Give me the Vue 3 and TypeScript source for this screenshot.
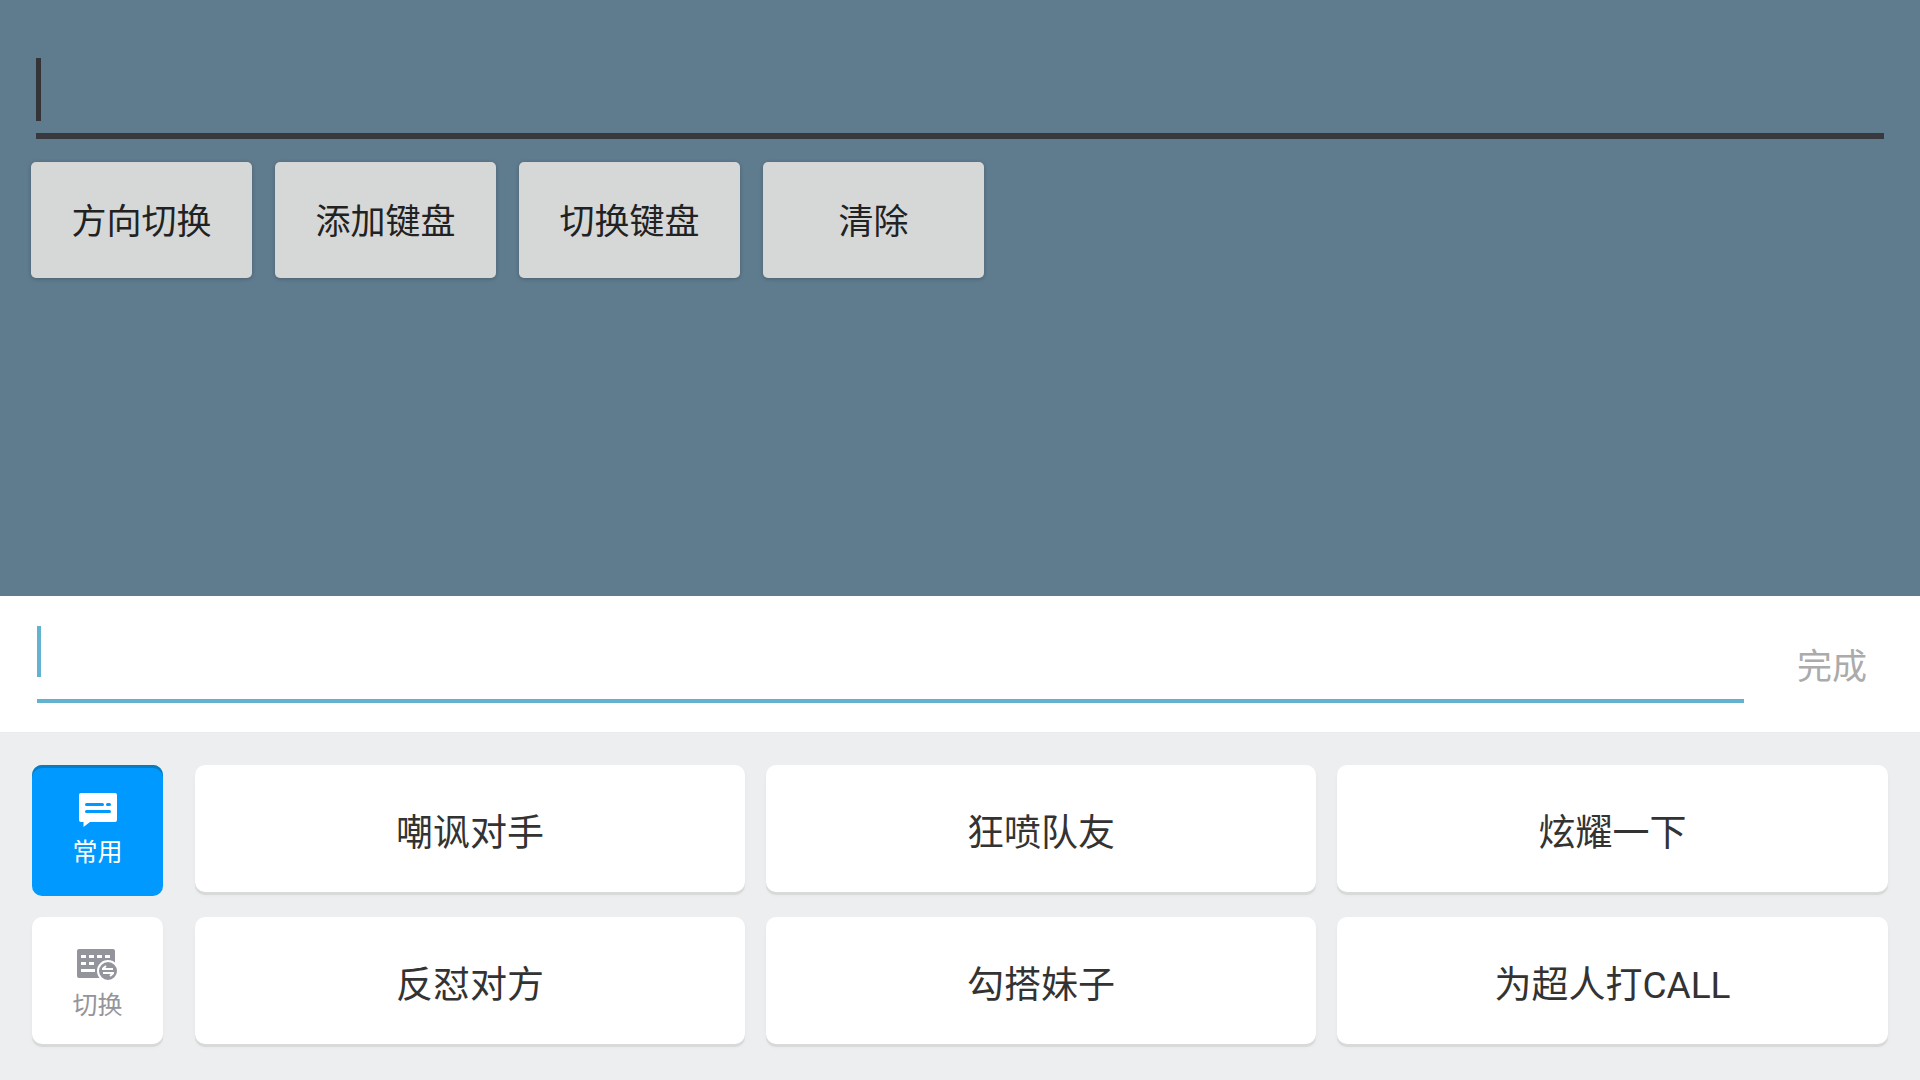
<script setup lang="ts">
const actions: string[] = ['方向切换', '添加键盘', '切换键盘', '清除']
const chips: string[] = ['嘲讽对手', '狂喷队友', '炫耀一下', '反怼对方', '勾搭妹子', '为超人打CALL']
</script>

<template>
  <div class="screen">
    <section class="top">
      <div class="field"><span class="caret"></span></div>
      <div class="actions">
        <button v-for="a in actions" :key="a" class="action">{{ a }}</button>
      </div>
    </section>
    <section class="inputbar">
      <div class="input"><span class="caret2"></span></div>
      <span class="done">完成</span>
    </section>
    <section class="keys">
      <div class="tabs">
        <div class="tab active">
          <svg width="38" height="35" viewBox="0 0 38 35">
            <path fill="#fff" d="M2 0H36a2 2 0 0 1 2 2V27a2 2 0 0 1-2 2H11L4.500 34V29H2a2 2 0 0 1-2-2V2a2 2 0 0 1 2-2Z" />
            <rect x="6" y="10" width="19" height="3" rx="1.500" fill="#0099FF" />
            <rect x="27" y="10" width="5" height="3" rx="1.500" fill="#0099FF" />
            <rect x="6" y="17" width="26" height="3" rx="1.500" fill="#0099FF" />
          </svg>
          <span>常用</span>
        </div>
        <div class="tab">
          <svg width="41" height="32" viewBox="0 0 41 32">
            <path fill="#94959c" d="M2 0H36a2 2 0 0 1 2 2V29H2a2 2 0 0 1-2-2V2a2 2 0 0 1 2-2Z" />
            <g fill="#fff">
              <rect x="4" y="6" width="5" height="3" />
              <rect x="12" y="6" width="5" height="3" />
              <rect x="20" y="6" width="5" height="3" />
              <rect x="28" y="6" width="5" height="3" />
              <rect x="4" y="13" width="5" height="3" />
              <rect x="12" y="13" width="5" height="3" />
              <rect x="4" y="20" width="14" height="3" />
            </g>
            <circle cx="31" cy="22" r="10" fill="#94959c" stroke="#fff" stroke-width="2" />
            <path fill="none" stroke="#fff" stroke-width="2" d="M25 20H36M37 24H26M29 17L25.500 20M33 27L36.500 24" />
          </svg>
          <span>切换</span>
        </div>
      </div>
      <div class="chips">
        <button v-for="c in chips" :key="c" class="chip">{{ c }}</button>
      </div>
    </section>
  </div>
</template>

<style>
html,
body {
  margin: 0;
  background: #eceef0;
}
</style>

<style scoped>
.screen {
  width: 1920px;
  height: 1080px;
  display: flex;
  flex-direction: column;
  overflow: hidden;
  font-family: Roboto, "Noto Sans CJK SC", sans-serif;
}
.top {
  height: 596px;
  box-sizing: border-box;
  background: #5f7b8e;
  padding: 58px 36px 0 31px;
}
.field {
  margin-left: 5px;
  height: 75px;
  border-bottom: 6px solid #37393f;
}
.caret {
  display: block;
  width: 5px;
  height: 63px;
  background: #333338;
}
.actions {
  display: flex;
  gap: 23px;
  margin-top: 23px;
}
.action {
  width: 221px;
  height: 116px;
  border: 0;
  border-radius: 5px;
  background: #d6d8d8;
  color: #222;
  font: inherit;
  font-size: 35px;
  padding: 0 0 4px;
  box-shadow: 0 1px 4px rgba(0, 0, 0, 0.22);
}
.inputbar {
  height: 137px;
  box-sizing: border-box;
  background: #fff;
  border-bottom: 1px solid #e9ebed;
  display: flex;
  padding: 30px 53px 0 37px;
}
.input {
  width: 1707px;
  height: 77px;
  box-sizing: border-box;
  border-bottom: 4px solid #62b2d0;
}
.caret2 {
  display: block;
  width: 4px;
  height: 51px;
  background: #62b2d0;
}
.done {
  margin-left: auto;
  margin-top: 17px;
  font-size: 35px;
  line-height: 50px;
  color: #ababab;
}
.keys {
  flex: 1;
  background: #eceef0;
  display: flex;
  gap: 32px;
  padding: 32px 32px 0;
}
.tabs {
  flex: none;
  display: flex;
  flex-direction: column;
  width: 131px;
  gap: 21px;
}
.tab {
  height: 127px;
  border-radius: 10px;
  background: #fff;
  box-shadow: 0 3px 0 #d8d9d9, 0 3px 4px rgba(0, 0, 0, 0.04);
  color: #94959c;
  font-size: 25px;
  line-height: 30px;
  display: flex;
  flex-direction: column;
  align-items: center;
  gap: 10px;
  padding-top: 32px;
  box-sizing: border-box;
}
.tab.active {
  height: 131px;
  padding-top: 28px;
  background: #0099ff;
  color: #fff;
  box-shadow: inset 0 3px 0 #0a7cc0;
}
.chips {
  flex: none;
  display: grid;
  grid-template-columns: 550px 550px 551px;
  grid-auto-rows: 127px;
  column-gap: 21px;
  row-gap: 25px;
}
.chip {
  border: 0;
  padding: 2px 0 0;
  border-radius: 10px;
  background: #fff;
  box-shadow: 0 3px 0 #d8d9d9, 0 3px 4px rgba(0, 0, 0, 0.04);
  color: #333;
  font: inherit;
  font-size: 37px;
}
</style>
